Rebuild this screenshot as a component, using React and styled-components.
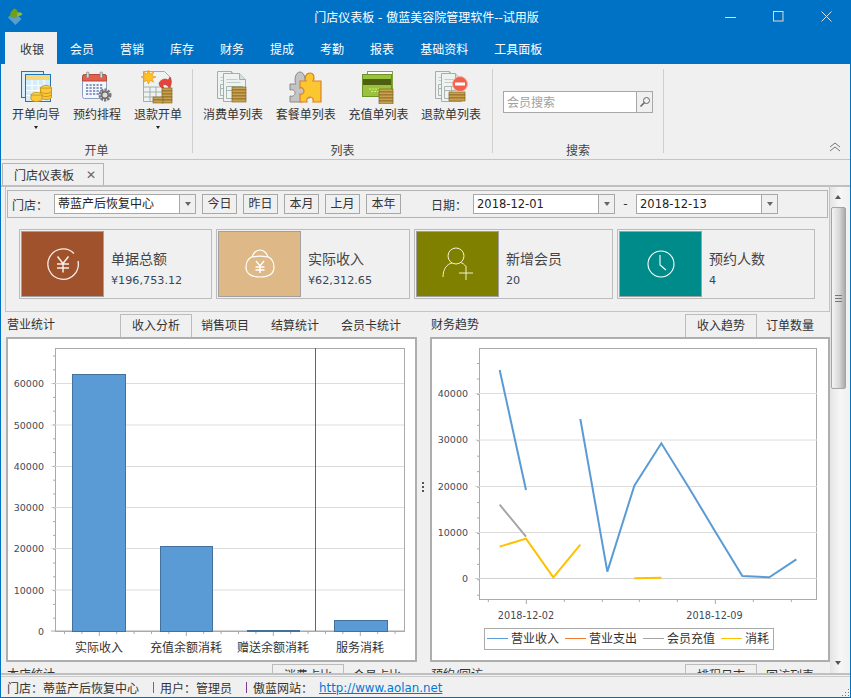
import React from 'react';
import styled, { createGlobalStyle } from 'styled-components';

const blue = '#0072c6';
const line = '#b4b4b4';

const GlobalStyle = createGlobalStyle`
  html, body { margin: 0; padding: 0; background: #f0f0f0; }
  body {
    font-family: "DejaVu Sans", "Noto Sans CJK SC", sans-serif;
    font-size: 12px;
    color: #333;
  }
  * { box-sizing: border-box; }
`;

const Window = styled.div`
  width: 851px;
  height: 698px;
  border: 1px solid ${blue};
  display: flex;
  flex-direction: column;
  overflow: hidden;
  background: #f0f0f0;
`;

const TitleBar = styled.div`
  height: 31px;
  flex: none;
  background: ${blue};
  color: #fff;
  display: grid;
  grid-template-columns: 1fr auto 1fr;
  align-items: center;
  padding: 0 4px 0 6px;
`;

const TitleText = styled.div`
  font-size: 12px;
`;

const WindowControls = styled.div`
  display: flex;
  justify-content: flex-end;
  align-items: center;
  gap: 37px;
  padding-right: 14px;
  line-height: 0;
`;

const MenuBar = styled.div`
  height: 32px;
  flex: none;
  background: ${blue};
  display: flex;
  padding-left: 4px;
`;

const MenuTab = styled.div`
  display: flex;
  align-items: center;
  height: 32px;
  padding: ${({ $active }) => ($active ? '1px 13px 0 15px' : '1px 13px 0')};
  background: ${({ $active }) => ($active ? '#f0f0f0' : 'transparent')};
  color: ${({ $active }) => ($active ? '#333' : '#fff')};
`;

const Ribbon = styled.div`
  height: 96px;
  flex: none;
  display: flex;
  padding-top: 5px;
  border-bottom: 1px solid #c4c4c4;
  position: relative;
`;

const RibbonGroup = styled.div`
  width: ${({ $width }) => $width}px;
  height: 84px;
  flex: none;
  display: flex;
  flex-direction: column;
  border-right: 1px solid #cfcfcf;
`;

const GroupBody = styled.div`
  flex: 1;
  display: flex;
  gap: ${({ $gap }) => $gap}px;
  padding-left: ${({ $left }) => $left}px;
`;

const GroupLabel = styled.div`
  text-align: center;
  line-height: 16px;
  height: 15px;
  margin-bottom: -5px;
  color: #444;
`;

const RibbonButton = styled.div`
  display: flex;
  flex-direction: column;
  align-items: center;
  color: #333;
  white-space: nowrap;
`;

const ButtonIcon = styled.div`
  height: 36px;
  display: flex;
  align-items: center;
  justify-content: center;
`;

const ButtonText = styled.div`
  line-height: 18px;
  margin-top: 1px;
`;

const Caret = styled.div`
  width: 0;
  height: 0;
  margin-top: 2px;
  border-left: 2.5px solid transparent;
  border-right: 2.5px solid transparent;
  border-top: 3px solid #222;
`;

const SearchBox = styled.div`
  margin: 22px 0 0 10px;
  width: 150px;
  height: 22px;
  display: flex;
  background: #fff;
  border: 1px solid #a8a8a8;
`;

const SearchText = styled.div`
  flex: 1;
  color: #a0a0a0;
  line-height: 22px;
  padding-left: 3px;
`;

const SearchButton = styled.div`
  width: 16px;
  background: #f0f0f0;
  border-left: 1px solid #a8a8a8;
  display: flex;
  align-items: center;
  justify-content: center;
`;

const Collapse = styled.div`
  position: absolute;
  right: 9px;
  bottom: 7px;
  line-height: 0;
`;

const DocBar = styled.div`
  height: 27px;
  flex: none;
  padding: 3px 0 0 1px;
  border-bottom: 2px solid #c0c0c0;
  display: flex;
`;

const DocTab = styled.div`
  width: 102px;
  height: 22px;
  display: flex;
  align-items: center;
  justify-content: space-between;
  padding: 0 7px 0 11px;
  border: 1px solid ${line};
  border-bottom: none;
`;

const CloseMark = styled.span`
  color: #666;
  font-size: 12px;
  font-weight: 700;
  font-family: "DejaVu Sans", sans-serif;
`;

const Main = styled.div`
  flex: 1;
  min-height: 0;
  display: flex;
  overflow: hidden;
`;

const Content = styled.div`
  width: 829px;
  padding-left: 4px;
  overflow: hidden;
`;

const TopSection = styled.div`
  height: 125px;
  padding: 3px 1px 0 1px;
  border: 1px solid #c4c4c4;
  border-top: none;
`;

const FilterBar = styled.div`
  height: 28px;
  display: flex;
  align-items: center;
  padding-left: 4px;
  border: 1px solid ${line};
`;

const FilterLabel = styled.div`
  width: 42px;
  flex: none;
  margin-left: ${({ $left }) => $left || 0}px;
`;

const ComboBox = styled.div`
  width: 142px;
  height: 20px;
  flex: none;
  display: flex;
  background: #fff;
  border: 1px solid #a8a8a8;
`;

const ComboText = styled.div`
  flex: 1;
  padding-left: 3px;
  line-height: 18px;
  font-size: ${({ $latin }) => ($latin ? '11.5px' : '12px')};
  color: #222;
  white-space: nowrap;
`;

const ComboArrow = styled.div`
  width: 16px;
  background: #f0f0f0;
  border-left: 1px solid #a8a8a8;
  display: flex;
  align-items: center;
  justify-content: center;
  &::after {
    content: '';
    border-left: 3.5px solid transparent;
    border-right: 3.5px solid transparent;
    border-top: 4px solid #666;
  }
`;

const QuickButtons = styled.div`
  display: flex;
  gap: 6px;
  margin-left: 6px;
`;

const QuickButton = styled.div`
  width: 35px;
  height: 20px;
  text-align: center;
  line-height: 18px;
  border: 1px solid #a8a8a8;
`;

const Dash = styled.div`
  width: 21px;
  text-align: center;
`;

const CardRow = styled.div`
  display: grid;
  grid-template-columns: 193px 194px 199px 198px;
  gap: 4px;
  margin-top: 11px;
  padding-left: 12px;
`;

const Card = styled.div`
  height: 70px;
  display: flex;
  align-items: center;
  padding: 1px;
  border: 1px solid #bcbcbc;
`;

const CardIcon = styled.div`
  width: 83px;
  height: 66px;
  flex: none;
  background: ${({ $color }) => $color};
  border: 1px solid #a0a0a0;
  display: flex;
  align-items: center;
  justify-content: center;
`;

const CardText = styled.div`
  margin-left: 7px;
  padding-top: 7px;
`;

const CardTitle = styled.div`
  font-size: 14px;
  line-height: 20px;
  margin-top: 2px;
  color: #444;
`;

const CardValue = styled.div`
  font-size: 11.2px;
  line-height: 16px;
  margin-top: 4px;
  color: #34465a;
`;

const PanesGrid = styled.div`
  display: grid;
  grid-template-columns: 411px 13px 400px;
  padding-left: 1px;
`;

const Pane = styled.div`
  display: flex;
  flex-direction: column;
`;

const PaneHeader = styled.div`
  height: 25px;
  display: flex;
  justify-content: space-between;
  align-items: flex-end;
  padding-right: 5px;
`;

const PaneTitle = styled.div`
  line-height: 20px;
  padding: 0 0 2px 1px;
`;

const PaneTabs = styled.div`
  display: flex;
`;

const PaneTab = styled.div`
  height: 23px;
  line-height: 23px;
  padding: ${({ $active }) => ($active ? '0 11px' : '0 10px')};
  margin-right: ${({ $active }) => ($active ? '-2px' : '0')};
  border: 1px solid ${({ $active }) => ($active ? '#bcbcbc' : 'transparent')};
  border-bottom: none;
`;

const ChartPanel = styled.div`
  height: 325px;
  background: #fff;
  border: 2px solid #aeaeae;
  line-height: 0;
`;

const Splitter = styled.div`
  display: flex;
  flex-direction: column;
  align-items: center;
  justify-content: center;
  gap: 2px;
  padding-right: 1px;
  i {
    width: 2px;
    height: 2px;
    background: #555;
  }
`;

const ScrollBar = styled.div`
  width: 20px;
  flex: none;
  display: flex;
  flex-direction: column;
  align-items: stretch;
  background: linear-gradient(90deg, #e4e4e4, #f6f6f6 50%, #f0f0f0);
`;

const ScrollArrow = styled.div`
  height: 20px;
  display: flex;
  align-items: center;
  justify-content: center;
  padding-right: 5px;
  &::after {
    content: '';
    border-left: 3.5px solid transparent;
    border-right: 3.5px solid transparent;
    ${({ $up }) => ($up ? 'border-bottom: 4px solid #555;' : 'border-top: 4px solid #555;')}
  }
`;

const ScrollThumb = styled.div`
  height: 182px;
  width: 15px;
  margin-left: 1px;
  border: 1px solid #a4a4a4;
  border-radius: 2px;
  background: linear-gradient(90deg, #f4f4f4, #d8d8d8 55%, #aaa);
  display: flex;
  align-items: center;
  justify-content: center;
`;

const ScrollGrip = styled.div`
  width: 7px;
  height: 7px;
  background: repeating-linear-gradient(180deg, #777 0 1px, transparent 1px 3px);
`;

const ScrollSpacer = styled.div`
  flex: 1;
`;

const StatusBar = styled.div`
  height: 24px;
  flex: none;
  display: flex;
  align-items: center;
  padding: 3px 0 0 6px;
  border-top: 2px solid #c0c0c0;
  box-shadow: inset 0 1px #f0f0f0, inset 0 2px #cccccc;
  position: relative;
`;

const StatusItem = styled.span`
  white-space: nowrap;
`;

const StatusPipe = styled.span`
  width: 1px;
  height: 11px;
  margin: 0 6px 0 ${({ $left }) => $left}px;
  background: ${({ $color }) => $color};
`;

const StatusLink = styled.a`
  margin-left: 6px;
  font-size: 11.8px;
  color: #0078d7;
  text-decoration: underline;
`;

const ResizeGrip = styled.div`
  position: absolute;
  right: 1px;
  bottom: 1px;
  width: 8px;
  height: 8px;
  background: radial-gradient(circle, #777 0 1px, transparent 1px) 0 0 / 3px 3px;
  clip-path: polygon(100% 0, 100% 100%, 0 100%);
`;

/* ---- small drawings ---- */

const Coins = ({ x, y, n = 4, w = 12, color = '#c9a24e', edge = '#7a5a1c' }) => (
  <g>
    {Array.from({ length: n }).map((_, i) => (
      <rect key={i} x={x} y={y + i * 3} width={w} height={3} fill={color} stroke={edge} strokeWidth="0.6" />
    ))}
  </g>
);

const DocSheet = ({ x, y, w = 20, h = 26 }) => (
  <g>
    <path d={`M${x} ${y}h${w - 6}l6 6v${h - 6}h-${w}z`} fill="#eef3f1" stroke="#a3aeab" />
    <path d={`M${x + w - 6} ${y}v6h6`} fill="#d5dedb" stroke="#a3aeab" />
    <path d={`M${x + 3} ${y + 6}h${w - 11}M${x + 3} ${y + 9}h${w - 8}`} stroke="#c2ccc9" />
    <path d={`M${x + 3} ${y + 13}h${w - 6}v${h - 16}h-${w - 6}zM${x + 3} ${y + 17}h${w - 6}M${x + w / 2} ${y + 13}v${h - 16}`} fill="none" stroke="#a9b6b2" />
  </g>
);

const Ico = ({ children, w = 34, h = 34 }) => (
  <svg width={w} height={h} viewBox={`0 0 ${w} ${h}`}>{children}</svg>
);

const WizardIcon = () => (
  <Ico>
    <rect x="2.5" y="1.5" width="22" height="26" fill="#d9eefb" stroke="#1f78b4" />
    <rect x="6.5" y="4.5" width="25" height="27" fill="#fff" stroke="#1f78b4" />
    <rect x="7" y="5" width="24" height="5" fill="#f6d77c" />
    <rect x="7" y="10" width="24" height="21" fill="#d6ecfa" />
    <path d="M7 15.5h24M7 20.5h24M7 25.5h24M13 10v21M19 10v21M25 10v21" stroke="#fff" />
    <ellipse cx="27" cy="18" rx="5.5" ry="2.5" fill="#ffd75a" stroke="#c89a20" />
    <path d="M21.5 18v9a5.5 2.5 0 0 0 11 0v-9z" fill="#fbc83a" stroke="#c89a20" />
    <path d="M21.5 21a5.5 2.5 0 0 0 11 0M21.5 24a5.5 2.5 0 0 0 11 0" fill="none" stroke="#c89a20" />
    <ellipse cx="17.5" cy="25" rx="5.5" ry="2.5" fill="#ffd75a" stroke="#c89a20" />
    <path d="M12 25v4a5.5 2.5 0 0 0 11 0v-4z" fill="#fbc83a" stroke="#c89a20" />
  </Ico>
);

const CalendarIcon = () => (
  <Ico>
    <rect x="2.5" y="4.5" width="24" height="24" rx="2" fill="#f4f7fb" stroke="#8d9fc2" />
    <path d="M2.5 11V6.5a2 2 0 0 1 2-2h20a2 2 0 0 1 2 2V11z" fill="#e2604c" stroke="#b8483a" />
    <rect x="6.5" y="2" width="2.5" height="6" rx="1" fill="#d8d8d8" stroke="#777" strokeWidth="0.6" />
    <rect x="20" y="2" width="2.5" height="6" rx="1" fill="#d8d8d8" stroke="#777" strokeWidth="0.6" />
    {[14, 17, 20, 23].map((y) =>
      [6, 9.5, 13, 16.5, 20].map((x) => <rect key={`${x}-${y}`} x={x} y={y} width="2.2" height="2" fill="#8a97c4" />)
    )}
    <circle cx="25" cy="25" r="5" fill="#e4e4e4" stroke="#777" strokeWidth="3" strokeDasharray="2.2 1" />
    <circle cx="25" cy="25" r="3.2" fill="#ddd" stroke="#666" strokeWidth="1.4" />
  </Ico>
);

const RefundOrderIcon = () => (
  <Ico>
    <path d="M2.5 1.5h21l6 6v24h-27z" fill="#eef3f1" stroke="#a3aeab" />
    <path d="M3 17h18M3 22h18M3 27h18M9 17v14M15 17v14" stroke="#a3aeab" />
    <path d="M7.5 0l1.4 4 3.8-2-1.8 3.8 4.1 1.2-4.1 1.5 1.8 3.7-3.8-2-1.4 4-1.4-4-3.8 2 1.8-3.7L0 7l4.1-1.2L2.3 2l3.8 2z" fill="#ffc31f" stroke="#f08a10" strokeWidth="0.6" />
    <path d="M18 13c2-4 7-5 9-3l2-3c2 3 2 8-1 11-1-3-4-4-6-3 0 1 0 2 1 3-3 0-5-2-5-5z" fill="#e4443c" stroke="#b83028" strokeWidth="0.5" />
    <Coins x={21} y={18} n={5} w={10} />
    <Coins x={12} y={27} n={2} w={10} />
  </Ico>
);

const ListIcon = () => (
  <Ico>
    <DocSheet x={1.5} y={1.5} w={20} h={27} />
    <DocSheet x={7.5} y={3.5} w={22} h={28} />
    <Coins x={16} y={17} n={5} w={14} />
  </Ico>
);

const PuzzleIcon = () => (
  <Ico>
    <path d="M1 14h6c-2-3-1-12 4-12s6 9 4 12h6v14h-6c2 2 0 4-3 4H1v-6c3 1 5-1 5-3s-2-4-5-3z" fill="#c4c4c4" stroke="#8a8a8a" />
    <path d="M11 11h6c-2-3 0-8 4-8s5 5 3 8h8v21h-8c1-3-1-5-3-5s-4 2-3 5h-7v-8c2 1 4-1 4-3s-2-4-4-3z" fill="#fbc630" stroke="#d9822a" strokeWidth="1.2" />
  </Ico>
);

const CardListIcon = () => (
  <Ico>
    <rect x="6.5" y="1.5" width="25" height="18" fill="#fff" stroke="#7ea53a" />
    <rect x="1.5" y="4.5" width="29" height="22" fill="#9bc23f" stroke="#6d9428" />
    <rect x="2" y="9" width="28" height="6" fill="#4e5f12" />
    <path d="M8 19h10M10 21.5h10" stroke="#d9ef7a" strokeDasharray="2 1" />
    <Coins x={18} y={19} n={5} w={14} />
  </Ico>
);

const RefundListIcon = () => (
  <Ico>
    <DocSheet x={1.5} y={1.5} w={20} h={27} />
    <DocSheet x={7.5} y={3.5} w={20} h={28} />
    <Coins x={15} y={22} n={3} w={16} />
    <circle cx="26" cy="14" r="7.5" fill="#f2604e" stroke="#f5b3a8" />
    <rect x="21" y="12.5" width="10" height="3" fill="#fff" />
  </Ico>
);

const YuanOrderIcon = () => (
  <svg width="36" height="36" viewBox="0 0 36 36" fill="none" stroke="#f6eee8" strokeWidth="1.3">
    <path d="M29 7.5A15.2 15.2 0 1 0 33 15" />
    <path d="M12.5 10.5l5.5 7 5.5-7M18 17.5v9M12 18h12M12 22h12" strokeWidth="1.5" />
  </svg>
);

const MoneyBagIcon = () => (
  <svg width="32" height="32" viewBox="0 0 32 32" fill="none" stroke="#fff" strokeWidth="1.2">
    <path d="M9 8c-4 2-7 6-7 11 0 7 6 10 14 10s14-3 14-10c0-5-3-9-7-11" />
    <path d="M9 9c-1-2 2-7 7-7s8 5 7 7c-4-1-10-1-14 0z" />
    <path d="M12 13l4 5 4-5M16 18v7M11.5 19h9M11.5 22h9" strokeWidth="1.4" />
  </svg>
);

const AddUserIcon = () => (
  <svg width="32" height="34" viewBox="0 0 32 34" fill="none" stroke="#f2f2d8" strokeWidth="1">
    <circle cx="14" cy="9" r="8" />
    <path d="M1 30c0-8 4-13 9-14M18.5 15.5c2 .6 3.8 1.8 5 3.5" />
    <path d="M17 26h14M24 19v14" />
  </svg>
);

const ClockIcon = () => (
  <svg width="30" height="30" viewBox="0 0 30 30" fill="none" stroke="#fff" strokeWidth="1.1">
    <circle cx="15" cy="15" r="13" />
    <path d="M14 6v10l6 5" />
  </svg>
);

/* ---- charts ---- */

const BarChart = () => {
  const grid = [[60000, 383.5], [50000, 425], [40000, 466.5], [30000, 507.5], [20000, 548.5], [10000, 590], [0, 631]];
  const bars = [[72, 53, 374], [160, 52, 546], [247, 52, 630], [334, 53, 620]];
  const cats = [['实际收入', 99], ['充值余额消耗', 186], ['赠送余额消耗', 273], ['服务消耗', 360]];
  const minor = Array.from({ length: 20 }, (_, i) => 356 + i * 13.8);
  const xTicks = Array.from({ length: 20 }, (_, i) => 64.5 + i * 17.4);
  return (
    <svg width="407" height="321" viewBox="8 339 407 321" fontFamily='"DejaVu Sans","Noto Sans CJK SC",sans-serif'>
      <rect x="55.5" y="348.5" width="349" height="283" fill="#fff" stroke="#aaa" />
      {grid.map(([v, y]) => (
        <g key={v}>
          <path d={`M51 ${y}H404`} stroke={v === 0 ? '#aaa' : '#dcdcdc'} />
          <text x="44" y={y + 3.5} textAnchor="end" fontSize="9.5" fill="#3f4a58">{v}</text>
        </g>
      ))}
      {minor.map((y) => <path key={y} d={`M53 ${y}h2`} stroke="#aaa" />)}
      {bars.map(([x, w, top]) => (
        <rect key={x} x={x + 0.5} y={top + 0.5} width={w} height={631 - top} fill="#5b9bd5" stroke="#41719c" />
      ))}
      <path d="M315.5 348V631" stroke="#b030b0" />
      {xTicks.map((x, i) => <path key={x} d={`M${x} 632v${i % 5 === 2 ? 4 : 2}`} stroke="#aaa" />)}
      {cats.map(([t, x]) => (
        <text key={t} x={x} y="652" textAnchor="middle" fontSize="12" fill="#333">{t}</text>
      ))}
    </svg>
  );
};

const toX = (v) => 425 + v / 3;
const toY = (v) => 340 + v / 3;
const poly = (pts) => pts.map(([x, y]) => `${toX(x)},${toY(y)}`).join(' ');

const LineChart = () => {
  const grid = [[40000, 393], [30000, 439.5], [20000, 486], [10000, 532], [0, 578]];
  const series = [
    ['#5b9bd5', [[224, 90], [303, 450]]],
    ['#5b9bd5', [[466, 237], [547, 695], [628, 437], [709, 310], [790, 440], [871, 575], [952, 708], [1033, 712], [1114, 658]]],
    ['#a5a5a5', [[224, 494], [303, 590]]],
    ['#ffc000', [[224, 620], [303, 596], [385, 712], [466, 614]]],
    ['#ffc000', [[628, 715], [709, 713]]],
  ];
  const minor = Array.from({ length: 16 }, (_, i) => 363.5 + i * 15.45);
  const ticks = [190, 304, 418, 532, 643, 757, 871, 985, 1099];
  const legend = [['营业收入', '#5b9bd5', 487], ['营业支出', '#ed7d31', 565], ['会员充值', '#a5a5a5', 643], ['消耗', '#ffc000', 721]];
  return (
    <svg width="396" height="321" viewBox="432 339 396 321" fontFamily='"DejaVu Sans","Noto Sans CJK SC",sans-serif'>
      <rect x="479.5" y="348.5" width="337" height="251" fill="#fff" stroke="#aaa" />
      {grid.map(([v, y]) => (
        <g key={v}>
          <path d={`M475 ${y + 0.5}H817`} stroke={v === 0 ? '#d0d0d0' : '#dcdcdc'} />
          <text x="468" y={y + 3.5} textAnchor="end" fontSize="9.5" fill="#3f4a58">{v}</text>
        </g>
      ))}
      {minor.map((y) => <path key={y} d={`M477 ${y}h2`} stroke="#aaa" />)}
      {series.map(([c, pts], i) => (
        <polyline key={i} points={poly(pts)} fill="none" stroke={c} strokeWidth="2" />
      ))}
      {ticks.map((x) => <path key={x} d={`M${toX(x)} 600v${x === 304 || x === 871 ? 4 : 2}`} stroke="#aaa" />)}
      <text x="526" y="619" textAnchor="middle" fontSize="9.7" fill="#3f4a58">2018-12-02</text>
      <text x="714.5" y="619" textAnchor="middle" fontSize="9.7" fill="#3f4a58">2018-12-09</text>
      <rect x="484.5" y="628.5" width="289" height="21" fill="#fff" stroke="#aaa" />
      {legend.map(([t, c, x]) => (
        <g key={t}>
          <path d={`M${x} 638.5h21`} stroke={c} />
          <text x={x + 24} y="643" fontSize="12" fill="#333">{t}</text>
        </g>
      ))}
    </svg>
  );
};

/* ---- data ---- */

const menus = ['收银', '会员', '营销', '库存', '财务', '提成', '考勤', '报表', '基础资料', '工具面板'];

const orderButtons = [
  { label: '开单向导', Icon: WizardIcon, caret: true },
  { label: '预约排程', Icon: CalendarIcon },
  { label: '退款开单', Icon: RefundOrderIcon, caret: true },
];

const listButtons = [
  { label: '消费单列表', Icon: ListIcon },
  { label: '套餐单列表', Icon: PuzzleIcon },
  { label: '充值单列表', Icon: CardListIcon },
  { label: '退款单列表', Icon: RefundListIcon },
];

const cards = [
  { title: '单据总额', value: '¥196,753.12', color: '#a0522d', Icon: YuanOrderIcon },
  { title: '实际收入', value: '¥62,312.65', color: '#deb887', Icon: MoneyBagIcon },
  { title: '新增会员', value: '20', color: '#808000', Icon: AddUserIcon },
  { title: '预约人数', value: '4', color: '#008b8b', Icon: ClockIcon },
];

const ToolButton = ({ label, Icon, caret }) => (
  <RibbonButton>
    <ButtonIcon><Icon /></ButtonIcon>
    <ButtonText>{label}</ButtonText>
    {caret && <Caret />}
  </RibbonButton>
);

const Combo = ({ text, latin }) => (
  <ComboBox>
    <ComboText $latin={latin}>{text}</ComboText>
    <ComboArrow />
  </ComboBox>
);

const PaneBlock = ({ title, tabs, children }) => (
  <Pane>
    <PaneHeader>
      <PaneTitle>{title}</PaneTitle>
      <PaneTabs>
        {tabs.map((t, i) => <PaneTab key={t} $active={i === 0}>{t}</PaneTab>)}
      </PaneTabs>
    </PaneHeader>
    <ChartPanel>{children}</ChartPanel>
  </Pane>
);

export default function App() {
  return (
    <>
      <GlobalStyle />
      <Window>
        <TitleBar>
          <svg width="17" height="18" viewBox="0 0 17 18">
            <path d="M1 9.5l6-6 7.5 7.5-6 6z" fill="#5d9ccf" />
            <path d="M3 8c0-3.5 2.5-6.5 4.5-7.5 3 1 4 4 3 7.5-1 2-6 3-7.5 0z" fill="#6f9f1c" />
            <path d="M10 5c1.5-1 4-1 5.5 1-1 2-3.5 2-5.5 2z" fill="#8fbc2f" />
          </svg>
          <TitleText>门店仪表板 - 傲蓝美容院管理软件--试用版</TitleText>
          <WindowControls>
            <svg width="11" height="11" viewBox="0 0 11 11"><path d="M0 6.5h11" stroke="#cfe3f5" /></svg>
            <svg width="11" height="11" viewBox="0 0 11 11"><rect x="0.5" y="0.5" width="9.5" height="9.5" fill="none" stroke="#e6d8d0" /></svg>
            <svg width="11" height="11" viewBox="0 0 11 11"><path d="M0.5 0.5l10 10M10.5 0.5l-10 10" stroke="#cfe3f5" /></svg>
          </WindowControls>
        </TitleBar>

        <MenuBar>
          {menus.map((m, i) => <MenuTab key={m} $active={i === 0}>{m}</MenuTab>)}
        </MenuBar>

        <Ribbon>
          <RibbonGroup $width={192}>
            <GroupBody $left={11} $gap={13}>
              {orderButtons.map((b) => <ToolButton key={b.label} {...b} />)}
            </GroupBody>
            <GroupLabel>开单</GroupLabel>
          </RibbonGroup>
          <RibbonGroup $width={300}>
            <GroupBody $left={10} $gap={12.7}>
              {listButtons.map((b) => <ToolButton key={b.label} {...b} />)}
            </GroupBody>
            <GroupLabel>列表</GroupLabel>
          </RibbonGroup>
          <RibbonGroup $width={171}>
            <GroupBody $left={0} $gap={0}>
              <SearchBox>
                <SearchText>会员搜索</SearchText>
                <SearchButton>
                  <svg width="12" height="12" viewBox="0 0 12 12" fill="none" stroke="#666">
                    <circle cx="7.5" cy="4.5" r="3" />
                    <path d="M5.5 6.5L1.5 10.5" strokeWidth="1.6" />
                  </svg>
                </SearchButton>
              </SearchBox>
            </GroupBody>
            <GroupLabel>搜索</GroupLabel>
          </RibbonGroup>
          <Collapse>
            <svg width="12" height="10" viewBox="0 0 12 10" fill="none" stroke="#777">
              <path d="M1 5l5-4 5 4M1 9l5-4 5 4" />
            </svg>
          </Collapse>
        </Ribbon>

        <DocBar>
          <DocTab>
            门店仪表板
            <CloseMark>✕</CloseMark>
          </DocTab>
        </DocBar>

        <Main>
          <Content>
            <TopSection>
              <FilterBar>
                <FilterLabel>门店：</FilterLabel>
                <Combo text="蒂蓝产后恢复中心" />
                <QuickButtons>
                  {['今日', '昨日', '本月', '上月', '本年'].map((t) => <QuickButton key={t}>{t}</QuickButton>)}
                </QuickButtons>
                <FilterLabel $left={30}>日期：</FilterLabel>
                <Combo text="2018-12-01" latin />
                <Dash>-</Dash>
                <Combo text="2018-12-13" latin />
              </FilterBar>
              <CardRow>
                {cards.map(({ title, value, color, Icon }) => (
                  <Card key={title}>
                    <CardIcon $color={color}><Icon /></CardIcon>
                    <CardText>
                      <CardTitle>{title}</CardTitle>
                      <CardValue>{value}</CardValue>
                    </CardText>
                  </Card>
                ))}
              </CardRow>
            </TopSection>

            <PanesGrid>
              <PaneBlock title="营业统计" tabs={['收入分析', '销售项目', '结算统计', '会员卡统计']}>
                <BarChart />
              </PaneBlock>
              <Splitter><i /><i /><i /></Splitter>
              <PaneBlock title="财务趋势" tabs={['收入趋势', '订单数量']}>
                <LineChart />
              </PaneBlock>
              <PaneBlock title="本店统计" tabs={['消费占比', '会员占比']} />
              <Splitter />
              <PaneBlock title="预约/回访" tabs={['排程日志', '回访列表']} />
            </PanesGrid>
          </Content>
          <ScrollBar>
            <ScrollArrow $up />
            <ScrollThumb><ScrollGrip /></ScrollThumb>
            <ScrollSpacer />
            <ScrollArrow />
          </ScrollBar>
        </Main>

        <StatusBar>
          <StatusItem>门店：蒂蓝产后恢复中心</StatusItem>
          <StatusPipe $left={14} $color="#3a7ca5" />
          <StatusItem>用户：管理员</StatusItem>
          <StatusPipe $left={14} $color="#7a3a8a" />
          <StatusItem>傲蓝网站：</StatusItem>
          <StatusLink href="#">http://www.aolan.net</StatusLink>
          <ResizeGrip />
        </StatusBar>
      </Window>
    </>
  );
}
